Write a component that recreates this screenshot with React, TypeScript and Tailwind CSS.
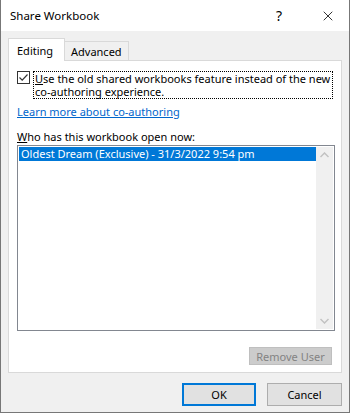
import { X } from 'lucide-react'

const font = { fontFamily: '"Noto Sans", "Liberation Sans", sans-serif' }

export default function App() {
  return (
    <div
      className="w-[350px] h-[413px] bg-[#f0f0f0] border-x border-b border-[#777777] flex flex-col text-[11px] text-black overflow-hidden"
      style={font}
    >
      {/* title bar */}
      <div className="h-[31px] bg-white flex items-center shrink-0">
        <span className="ml-[9px] text-[11.5px] leading-none">Share Workbook</span>
        <span className="ml-auto text-[14px] leading-none w-[8px] mr-[36px]">?</span>
        <X size={16} strokeWidth={1.2} className="mr-[13px]" />
      </div>

      {/* tabs */}
      <div className="flex items-end ml-[7px] mt-[7px] h-[23px] relative z-10">
        <div className="h-[23px] w-[57px] bg-white border border-b-0 border-[#d9d9d9] flex items-center pl-[8px] leading-none">
          Editing
        </div>
        <div className="h-[20px] w-[64px] bg-[#f0f0f0] border border-l-0 border-[#d9d9d9] flex items-center pl-[6px] leading-none">
          Advanced
        </div>
      </div>

      {/* panel */}
      <div className="ml-[7px] w-[334px] h-[313px] -mt-px bg-white border border-[#d9d9d9] flex flex-col px-[8px]">
        <div className="flex items-start mt-[10px]">
          <div className="w-[13px] h-[13px] border border-[#333333] flex items-center justify-center shrink-0">
            <svg width="11" height="11" viewBox="0 0 11 11">
              <path d="M1.5 5.5 L4.2 8.2 L9.5 2.5" fill="none" stroke="#333333" strokeWidth="1.2" />
            </svg>
          </div>
          <div className="ml-[3px] w-[302px] border border-dotted border-black leading-[13px] pl-px">
            <span className="underline">U</span>se the old shared workbooks feature instead of the new co-authoring experience.
          </div>
        </div>

        <a className="mt-[6px] text-[#0066cc] underline leading-[14px] self-start">Learn more about co-authoring</a>

        <div className="mt-[11px] leading-[14px]">
          <span className="underline">W</span>ho has this workbook open now:
        </div>

        <div className="mt-[1px] w-[318px] h-[186px] border border-[#828790] flex p-px">
          <div className="flex-1">
            <div className="h-[14px] bg-[#0078d7] text-white leading-[14px] pl-[2px]">
              Oldest Dream (Exclusive) - 31/3/2022 9:54 pm
            </div>
          </div>
          <div className="w-[17px] bg-[#f0f0f0] flex flex-col items-center justify-between py-[5px]">
            <svg width="9" height="6" viewBox="0 0 9 6">
              <path d="M0.5 5 L4.5 1 L8.5 5" fill="none" stroke="#c2c2c2" strokeWidth="1.5" />
            </svg>
            <svg width="9" height="6" viewBox="0 0 9 6">
              <path d="M0.5 1 L4.5 5 L8.5 1" fill="none" stroke="#c2c2c2" strokeWidth="1.5" />
            </svg>
          </div>
        </div>

        <div className="flex justify-end mt-[16px] mr-[1px]">
          <button className="w-[83px] h-[18px] bg-[#cccccc] border border-[#bfbfbf] text-[#838383] leading-none flex items-center justify-center">
            Remove User
          </button>
        </div>
      </div>

      {/* footer */}
      <div className="flex justify-end gap-[11px] mt-[10px] mr-[7px]">
        <button className="w-[74px] h-[23px] bg-[#e1e1e1] border-2 border-[#0078d7] leading-none flex items-center justify-center">
          OK
        </button>
        <button className="w-[75px] h-[23px] bg-[#e1e1e1] border border-[#adadad] leading-none flex items-center justify-center">
          Cancel
        </button>
      </div>
    </div>
  )
}
